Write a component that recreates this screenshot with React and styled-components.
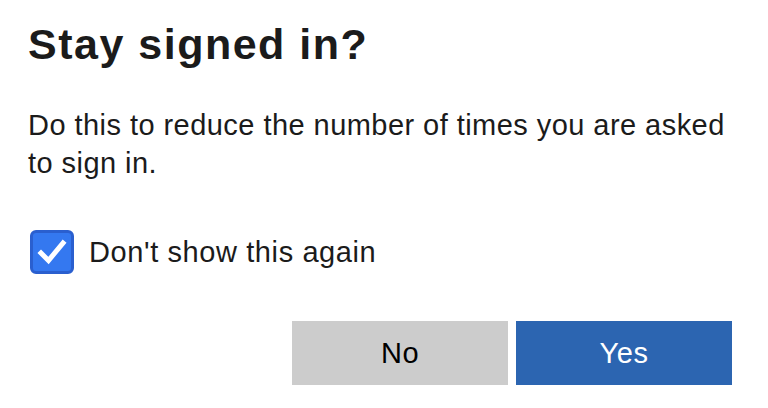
import React, { useState } from "react";
import styled, { createGlobalStyle } from "styled-components";

const Global = createGlobalStyle`
  html, body { margin: 0; padding: 0; background: #ffffff; }
  body { font-family: "Liberation Sans", Arial, Helvetica, sans-serif; color: #1b1b1b; }
`;

const Dialog = styled.div`
  width: 768px;
  height: 408px;
  box-sizing: border-box;
  padding: 20px 36px 0 28px;
  display: flex;
  flex-direction: column;
`;

const Title = styled.h1`
  margin: 0;
  font-size: 43px;
  line-height: 48px;
  font-weight: 700;
  letter-spacing: 1.5px;
  color: #1b1b1b;
`;

const Body = styled.p`
  margin: 38px 0 0 0;
  font-size: 29px;
  line-height: 38px;
  letter-spacing: 0.45px;
  color: #1b1b1b;
`;

const CheckRow = styled.label`
  margin-top: 48px;
  display: flex;
  align-items: center;
  gap: 15px;
  font-size: 29px;
  line-height: 44px;
  letter-spacing: 0.6px;
  cursor: pointer;
  margin-left: 2px;
`;

const Box = styled.span`
  width: 44px;
  height: 44px;
  box-sizing: border-box;
  border-radius: 6px;
  border: 3px solid ${(p) => (p.$checked ? "#2a5fcf" : "#767676")};
  background: ${(p) => (p.$checked ? "#3478f0" : "#ffffff")};
  display: flex;
  align-items: center;
  justify-content: center;
  flex-shrink: 0;
`;

const Actions = styled.div`
  margin-top: 47px;
  display: flex;
  justify-content: flex-end;
  gap: 8px;
`;

const Button = styled.button`
  width: 216px;
  height: 64px;
  border: none;
  border-radius: 0;
  font-family: "Liberation Sans", Arial, Helvetica, sans-serif;
  font-size: 29px;
  letter-spacing: 0.5px;
  background: ${(p) => (p.$primary ? "#2c65b1" : "#cccccc")};
  color: ${(p) => (p.$primary ? "#ffffff" : "#000000")};
  cursor: pointer;
`;

export default function App() {
  const [checked, setChecked] = useState(true);
  return (
    <>
      <Global />
      <Dialog>
        <Title>Stay signed in?</Title>
        <Body>Do this to reduce the number of times you are asked to sign in.</Body>
        <CheckRow onClick={() => setChecked((c) => !c)}>
          <Box $checked={checked}>
            {checked && (
              <svg width="30" height="30" viewBox="0 0 30 30">
                <path d="M4 16 L11.5 23.5 L26 6" fill="none" stroke="#ffffff" strokeWidth="5" strokeLinecap="square" strokeLinejoin="miter" />
              </svg>
            )}
          </Box>
          <span>Don't show this again</span>
        </CheckRow>
        <Actions>
          <Button>No</Button>
          <Button $primary>Yes</Button>
        </Actions>
      </Dialog>
    </>
  );
}
